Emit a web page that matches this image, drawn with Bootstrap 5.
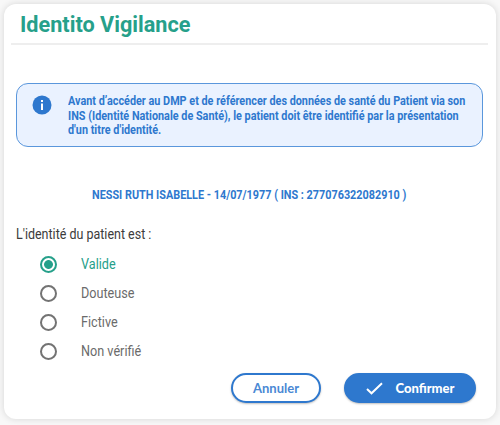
<!DOCTYPE html>
<html lang="fr">
<head>
<meta charset="utf-8">
<meta name="viewport" content="width=device-width, initial-scale=1">
<title>Identito Vigilance</title>
<link href="https://cdn.jsdelivr.net/npm/bootstrap@5.3.0/dist/css/bootstrap.min.css" rel="stylesheet">
<style>
body{font-family:Roboto,"Liberation Sans",sans-serif;background:#f8f8f8;width:500px;height:425px;overflow:hidden;padding:4px}
.dialog{height:415px;border:0;border-radius:12px;background:#fff;box-shadow:0 0 7px rgba(0,0,0,.14);padding:0 8px 0 7px}
.narrow{display:inline-block;transform-origin:0 50%;transform:scaleX(.903);white-space:nowrap}
.dialog-title{height:41px;border-bottom:2px solid #eee;color:#26a08a;font-size:22.3px;font-weight:700;line-height:41px;padding-left:9px;margin:0;white-space:nowrap}
.dialog-title .narrow{transform:scaleX(.971)}
.notice{height:64px;margin:38px 5px 0 5px;border:1px solid #5a97dc;border-radius:12px;background:#eaf2ff;color:#2e78ce;font-size:12px;font-weight:700;line-height:14.5px;padding:10px 0 0 15px}
.notice svg{margin:1px 16px 0 0}
.notice-text{width:0}
.identity{color:#2e78ce;font-size:12px;font-weight:700;line-height:16px;margin:40px 0 0 81px}
.question{color:#3c3c3c;font-size:14px;line-height:18px;margin:22px 0 0 5px}
.question .narrow{transform:scaleX(.892)}
.choices{margin:7px 0 0 29px}
.choice{height:29px;color:#6b6b6b;font-size:14px}
.choice input{appearance:none;width:17px;height:17px;margin:0 24px 0 0;border:2px solid #737373;border-radius:50%}
.choice.chosen{color:#26a08a}
.choice input:checked{border-color:#26a08a;background:radial-gradient(circle,#26a08a 4px,transparent 4.8px)}
.actions{margin:7px 12px 0 0;gap:23px}
.pill{height:30px;border:2px solid #2e78ce;border-radius:15px;padding:0;font-family:Lato,sans-serif;font-size:13px;font-weight:700;line-height:26px;box-shadow:0 1px 2px rgba(0,0,0,.25)}
.pill-cancel{width:90px;color:#4a88d4;background:#fff}
.pill-confirm{width:132px;color:#fff;background:#2e78ce;font-weight:900}
.pill-confirm svg{margin-right:13px}
</style>
</head>
<body>
<main class="dialog card">
  <h1 class="dialog-title"><span class="narrow">Identito Vigilance</span></h1>
  <div class="notice d-flex align-items-start">
    <svg width="20" height="20" viewBox="0 0 20 20" class="flex-shrink-0"><circle cx="10" cy="10" r="9.5" fill="#2e78ce"/><path d="M9 5h2v2H9zM9 8.5h2V15H9z" fill="#fff"/></svg>
    <div class="notice-text"><span class="narrow">Avant d’accéder au DMP et de référencer des données de santé du Patient via son<br>INS (Identité Nationale de Santé), le patient doit être identifié par la présentation<br>d'un titre d'identité.</span></div>
  </div>
  <div class="identity"><span class="narrow">NESSI RUTH ISABELLE - 14/07/1977 ( INS : 277076322082910 )</span></div>
  <div class="question"><span class="narrow">L'identité du patient est :</span></div>
  <div class="choices">
    <label class="choice chosen d-flex align-items-center"><input type="radio" name="status" checked><span class="narrow">Valide</span></label>
    <label class="choice d-flex align-items-center"><input type="radio" name="status"><span class="narrow">Douteuse</span></label>
    <label class="choice d-flex align-items-center"><input type="radio" name="status"><span class="narrow">Fictive</span></label>
    <label class="choice d-flex align-items-center"><input type="radio" name="status"><span class="narrow">Non vérifié</span></label>
  </div>
  <div class="actions d-flex justify-content-end">
    <button class="btn pill pill-cancel">Annuler</button>
    <button class="btn pill pill-confirm d-flex align-items-center justify-content-center"><svg width="17" height="13" viewBox="0 0 17 13"><path d="M1 7l4.5 4.3L16 1.3" fill="none" stroke="#fff" stroke-width="2"/></svg>Confirmer</button>
  </div>
</main>
<script src="https://cdn.jsdelivr.net/npm/bootstrap@5.3.0/dist/js/bootstrap.bundle.min.js"></script>
</body>
</html>
